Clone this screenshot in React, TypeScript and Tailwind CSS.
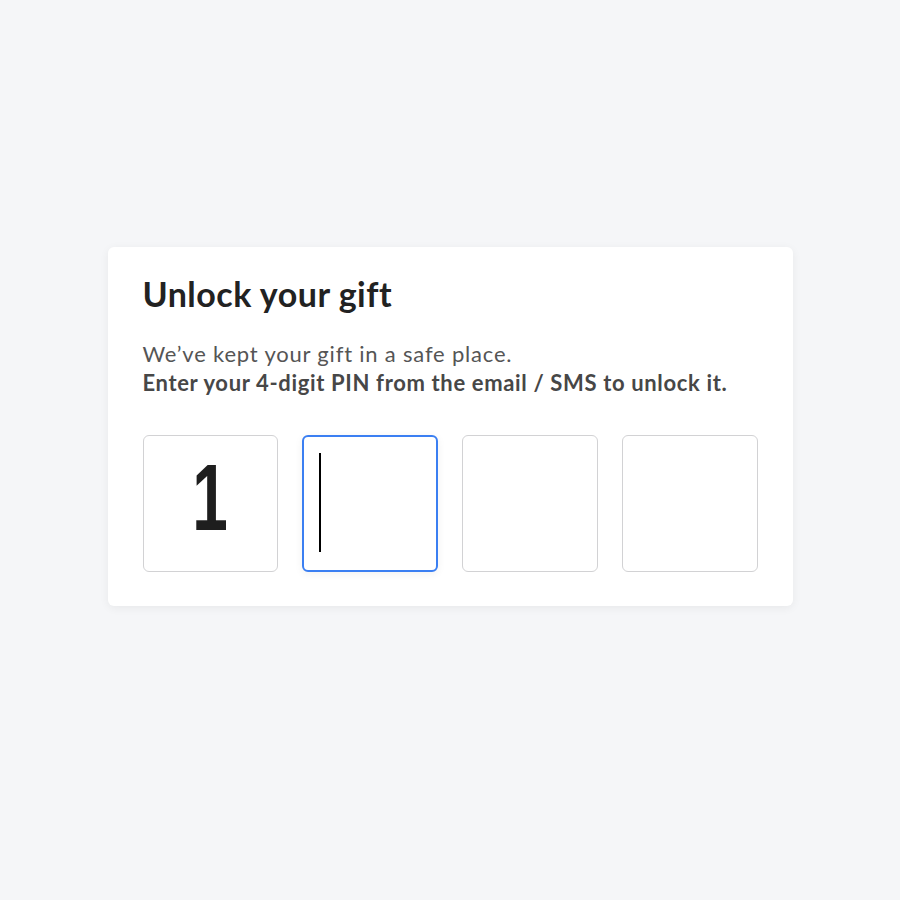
import React from 'react';

const PinBox: React.FC<{ value?: string; focused?: boolean }> = ({ value, focused }) => (
    <div
        className={
            focused
                ? 'relative h-[137px] w-[136px] rounded-[6px] border-2 border-[#3b7ff2] bg-white shadow-[0_2px_8px_rgba(0,0,0,0.06)]'
                : 'relative flex h-[137px] w-[136px] items-center justify-center rounded-[6px] border-[1.5px] border-[#d2d2d4] bg-white pb-[12px]'
        }
    >
        {value && (
            <span className="inline-block scale-x-[0.68] font-['Liberation_Sans',Arial,sans-serif] text-[94px] font-bold leading-none text-[#1e1e1e]">
                {value}
            </span>
        )}
        {focused && <span className="absolute left-[15px] top-[16px] h-[99px] w-[1.5px] bg-black" />}
    </div>
);

const App: React.FC = () => {
    return (
        <div className="min-h-screen bg-[#f5f6f8] pt-[247px] font-['Lato','Noto_Sans',sans-serif]">
            <div className="mx-auto w-[685px] rounded-[6px] bg-white px-[35px] pt-[27px] pb-[34px] shadow-[0_2px_10px_rgba(0,0,0,0.06)]">
                <h1 className="text-[34px] font-bold leading-[40px] tracking-[0.5px] text-[#222]">Unlock your gift</h1>
                <div className="mt-[25px] text-[22px] leading-[29px] text-[#555]">
                    <p className="tracking-[0.8px]">We’ve kept your gift in a safe place.</p>
                    <p className="font-bold tracking-[0.65px] text-[#474747]">
                        Enter your 4-digit PIN from the email / SMS to unlock it.
                    </p>
                </div>
                <div className="mt-[38px] flex gap-[24px]">
                    <PinBox value="1" />
                    <PinBox focused />
                    <PinBox />
                    <PinBox />
                </div>
            </div>
        </div>
    );
};

export default App;
